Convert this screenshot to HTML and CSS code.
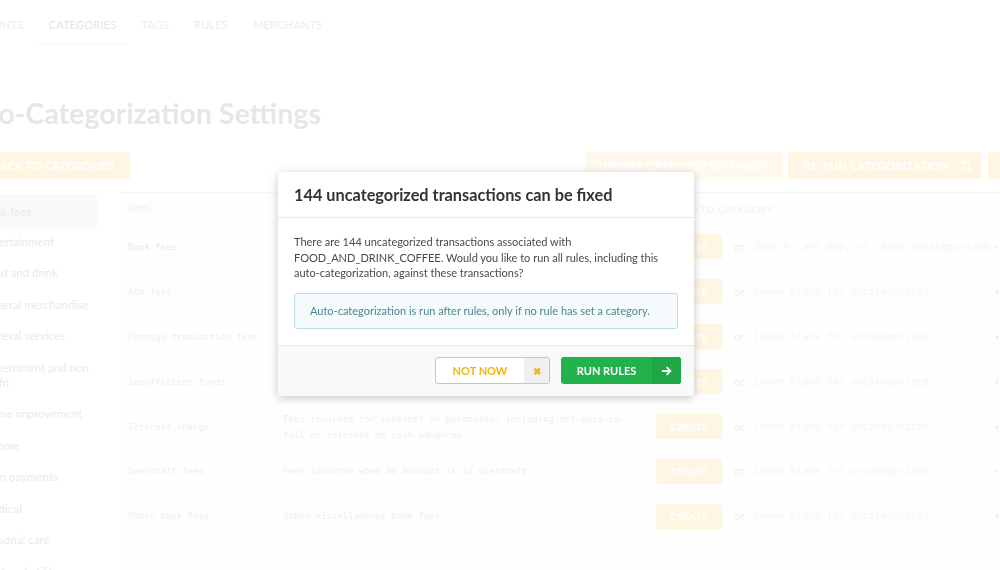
FILE: index.html
```html
<!DOCTYPE html>
<html>
<head>
<meta charset="utf-8">
<title>Auto-Categorization Settings</title>
<link rel="stylesheet" href="styles.css">
</head>
<body>
<div class="page">
  <nav class="tabs">
    <a class="tab">Accounts</a>
    <a class="tab active">Categories</a>
    <a class="tab">Tags</a>
    <a class="tab">Rules</a>
    <a class="tab">Merchants</a>
  </nav>

  <h1 class="title">Auto-Categorization Settings</h1>

  <div class="toolbar">
    <button class="btn btn-yellow btn-back">
      <svg width="10" height="10" viewBox="0 0 10 10"><path d="M9 5H1.5M5 1.5L1.5 5 5 8.5" fill="none" stroke="#fff" stroke-width="1.8"/></svg>
      <span>Back to categories</span>
    </button>
    <div class="toolbar-right">
      <button class="btn btn-pale btn-wide1">
        <span>Update category settings</span>
        <svg width="11" height="11" viewBox="0 0 12 12"><circle cx="6" cy="6" r="4.5" fill="none" stroke="#fff" stroke-width="1.8"/></svg>
      </button>
      <button class="btn btn-yellow btn-wide2">
        <span>Re-run categorization</span>
        <svg width="11" height="11" viewBox="0 0 12 12"><path d="M10 5A4 4 0 0 0 2.5 3.5M2 7a4 4 0 0 0 7.5 1.5" fill="none" stroke="#fff" stroke-width="1.8"/><path d="M2 1v3h3M10 11V8H7" fill="none" stroke="#fff" stroke-width="1.6"/></svg>
      </button>
      <button class="btn btn-yellow btn-cut"><span>Export</span></button>
    </div>
  </div>

  <div class="main">
    <aside class="sidebar">
      <div class="side-item active">Bank fees</div>
      <div class="side-item">Entertainment</div>
      <div class="side-item">Food and drink</div>
      <div class="side-item">General merchandise</div>
      <div class="side-item">General services</div>
      <div class="side-item">Government and non profit</div>
      <div class="side-item">Home improvement</div>
      <div class="side-item">Income</div>
      <div class="side-item">Loan payments</div>
      <div class="side-item">Medical</div>
      <div class="side-item">Personal care</div>
      <div class="side-item">Rent and utilities</div>
    </aside>

    <section class="table">
      <div class="row head">
        <div class="cell c-name">Name</div>
        <div class="cell c-desc"></div>
        <div class="cell c-auto"><span class="auto-head">Map to category</span></div>
      </div>
      <div class="row">
        <div class="cell c-name strong">Bank fees</div>
        <div class="cell c-desc"></div>
        <div class="cell c-auto"><span class="create">Create</span><span class="or">or</span><span class="select">Search, and map, or leave uncategorized</span><span class="caret">▾</span></div>
      </div>
      <div class="row">
        <div class="cell c-name">Atm fees</div>
        <div class="cell c-desc"></div>
        <div class="cell c-auto"><span class="create">Create</span><span class="or">or</span><span class="select">Leave blank for uncategorized</span><span class="caret">▾</span></div>
      </div>
      <div class="row">
        <div class="cell c-name">Foreign transaction fees</div>
        <div class="cell c-desc"></div>
        <div class="cell c-auto"><span class="create">Create</span><span class="or">or</span><span class="select">Leave blank for uncategorized</span><span class="caret">▾</span></div>
      </div>
      <div class="row">
        <div class="cell c-name">Insufficient funds</div>
        <div class="cell c-desc"></div>
        <div class="cell c-auto"><span class="create">Create</span><span class="or">or</span><span class="select">Leave blank for uncategorized</span><span class="caret">▾</span></div>
      </div>
      <div class="row">
        <div class="cell c-name">Interest charge</div>
        <div class="cell c-desc">Fees incurred for interest on purchases, including not-paid-in-full or interest on cash advances</div>
        <div class="cell c-auto"><span class="create">Create</span><span class="or">or</span><span class="select">Leave blank for uncategorized</span><span class="caret">▾</span></div>
      </div>
      <div class="row">
        <div class="cell c-name">Overdraft fees</div>
        <div class="cell c-desc">Fees incurred when an account is in overdraft</div>
        <div class="cell c-auto"><span class="create">Create</span><span class="or">or</span><span class="select">Leave blank for uncategorized</span><span class="caret">▾</span></div>
      </div>
      <div class="row">
        <div class="cell c-name">Other bank fees</div>
        <div class="cell c-desc">Other miscellaneous bank fees</div>
        <div class="cell c-auto"><span class="create">Create</span><span class="or">or</span><span class="select">Leave blank for uncategorized</span><span class="caret">▾</span></div>
      </div>
    </section>
  </div>
</div>

<div class="overlay"></div>

<div class="modal">
  <div class="modal-header">144 uncategorized transactions can be fixed</div>
  <div class="modal-body">
    <p class="modal-text">There are 144 uncategorized transactions associated with FOOD_AND_DRINK_COFFEE. Would you like to run all rules, including this auto-categorization, against these transactions?</p>
    <div class="info">Auto-categorization is run after rules, only if no rule has set a category.</div>
  </div>
  <div class="modal-footer">
    <button class="mbtn mbtn-outline"><span class="mbtn-label">Not now</span><span class="mbtn-icon">✖</span></button>
    <button class="mbtn mbtn-green"><span class="mbtn-label">Run rules</span><span class="mbtn-icon">
      <svg width="11" height="10" viewBox="0 0 11 10"><path d="M1 5h8.2M5.6 1.2L9.4 5 5.6 8.8" fill="none" stroke="#fff" stroke-width="1.8"/></svg>
    </span></button>
  </div>
</div>
</body>
</html>
```

FILE: styles.css
```css
* { box-sizing: border-box; }

html, body {
  margin: 0;
  padding: 0;
  width: 1000px;
  height: 570px;
  overflow: hidden;
  background: #ffffff;
  font-family: "Lato", "Open Sans", sans-serif;
}

.page {
  margin-left: -50px;
  width: 1120px;
}

/* tabs */
.tabs {
  display: flex;
  height: 44px;
}
.tab {
  padding: 18px 12.5px 0;
  height: 44px;
  font-size: 11px;
  line-height: 14px;
  text-transform: uppercase;
  letter-spacing: 0.2px;
  color: #8c8c8c;
  white-space: nowrap;
}
.tab.active {
  color: #555;
  border-bottom: 1px solid #c0c0c0;
}

.title {
  margin: 52px 0 0 2px;
  font-size: 28.6px;
  line-height: 34px;
  font-weight: 700;
  color: #6e6e6e;
  white-space: nowrap;
}

/* toolbar */
.toolbar {
  display: flex;
  margin-top: 22px;
  padding-left: 5px;
}
.btn {
  flex-shrink: 0;
  display: flex;
  align-items: center;
  height: 27px;
  border: 0;
  border-radius: 2px;
  font-family: "Lato", sans-serif;
  font-size: 11px;
  font-weight: 700;
  text-transform: uppercase;
  color: #fff;
  letter-spacing: 0.3px;
  white-space: nowrap;
}
.btn-yellow { background: #f5c65a; }
.btn-pale { background: #f8d98c; }
.btn-back {
  width: 175px;
  padding: 0 0 0 20px;
  gap: 8px;
}
.toolbar-right {
  display: flex;
  gap: 5px;
  margin-left: 455px;
  flex-shrink: 0;
}
.btn-wide1 {
  width: 198px;
  padding: 0 14px;
  justify-content: space-between;
}
.btn-wide2 {
  width: 194px;
  padding: 0 10px 0 16px;
  justify-content: space-between;
}
.btn-cut {
  width: 120px;
  padding: 0 12px;
  margin-left: 1px;
}

/* main */
.main {
  display: flex;
  margin-top: 13px;
  padding-left: 5px;
  gap: 13px;
}
.sidebar {
  flex-shrink: 0;
  width: 152px;
  padding: 2px 10px 0 0;
}
.side-item {
  padding: 8.25px 0 8.25px 27px;
  font-size: 11.5px;
  line-height: 15px;
  color: #777;
}
.side-item.active {
  background: #d6d8dc;
  padding-top: 10px;
  padding-bottom: 10px;
  margin-bottom: -3.5px;
}

.table {
  flex: 1;
  height: 390px;
  background: #f7f8fa;
  border-top: 1px solid #c6c9cf;
}
.row {
  display: grid;
  grid-template-columns: 155px 373px 1fr;
  height: 44.9px;
  align-items: center;
}
.row.head {
  height: 31.5px;
}
.cell {
  padding-left: 8px;
  font-family: "DejaVu Sans Mono", "Liberation Mono", monospace;
  font-size: 9px;
  line-height: 16px;
  color: #959595;
}
.cell.strong { color: #6a6a6a; }
.head .cell {
  font-family: "Lato", sans-serif;
  font-size: 10px;
  text-transform: uppercase;
  letter-spacing: 0.5px;
  color: #a8a8a8;
}
.head .c-name {
  font-family: "DejaVu Sans Mono", monospace;
  font-size: 9px;
}
.c-desc { padding-right: 12px; }
.c-auto {
  display: flex;
  align-items: center;
}
.auto-head { padding-left: 18px; white-space: nowrap; }
.create {
  flex-shrink: 0;
  width: 66px;
  height: 25px;
  display: flex;
  align-items: center;
  justify-content: center;
  border-radius: 2px;
  background: #f5c65a;
  color: #fff;
  font-family: "Lato", sans-serif;
  font-weight: 700;
  font-size: 10px;
  text-transform: uppercase;
}
.or {
  margin-left: 12px;
  font-family: "Lato", sans-serif;
  font-size: 11px;
  color: #9a9a9a;
}
.select {
  flex-shrink: 0;
  margin-left: 10px;
  width: 238px;
  font-size: 10px;
  color: #c2c2c2;
  white-space: nowrap;
}
.caret {
  margin-left: 2px;
  font-size: 9px;
  color: #999;
}

/* overlay */
.overlay {
  position: fixed;
  inset: 0;
  background: rgba(255, 255, 255, 0.83);
}

/* modal */
.modal {
  position: fixed;
  left: 278px;
  top: 172px;
  width: 416px;
  background: #fff;
  border-radius: 3px;
  box-shadow: 0 2px 10px rgba(0, 0, 0, 0.22);
  overflow: hidden;
}
.modal-header {
  height: 46px;
  padding: 13px 16px 0;
  font-size: 16.3px;
  line-height: 20px;
  font-weight: 700;
  color: #333;
  border-bottom: 1px solid #eaeaea;
  white-space: nowrap;
}
.modal-body {
  padding: 16px 16px 16px;
  border-bottom: 1px solid #ececec;
}
.modal-text {
  margin: 0;
  font-size: 11px;
  line-height: 15.5px;
  color: #4a4a4a;
}
.info {
  margin-top: 12px;
  height: 36px;
  padding: 0 15px;
  display: flex;
  align-items: center;
  background: #f5fbfc;
  border: 1px solid #bcdde4;
  border-radius: 3px;
  font-size: 11px;
  color: #4e8690;
}
.modal-footer {
  height: 50px;
  display: flex;
  justify-content: flex-end;
  align-items: center;
  gap: 11px;
  padding: 0 13px 0 0;
  background: #f8f9fb;
}
.mbtn {
  display: flex;
  height: 27px;
  padding: 0;
  border-radius: 3px;
  overflow: hidden;
  font-family: "Lato", sans-serif;
  font-size: 11px;
  font-weight: 700;
  text-transform: uppercase;
}
.mbtn-label {
  display: flex;
  align-items: center;
  justify-content: center;
}
.mbtn-icon {
  display: flex;
  align-items: center;
  justify-content: center;
}
.mbtn-outline {
  width: 115px;
  border: 1px solid #f3c54a;
  background: #fff;
  color: #f0b41a;
}
.mbtn-outline .mbtn-label { width: 88px; }
.mbtn-outline .mbtn-icon {
  flex: 1;
  background: #efefef;
  font-size: 10px;
  color: #f0b41a;
}
.mbtn-green {
  width: 120px;
  border: 0;
  background: #22b24c;
  color: #fff;
}
.mbtn-green .mbtn-label { width: 91px; }
.mbtn-green .mbtn-icon {
  flex: 1;
  background: #1fa746;
}
```
